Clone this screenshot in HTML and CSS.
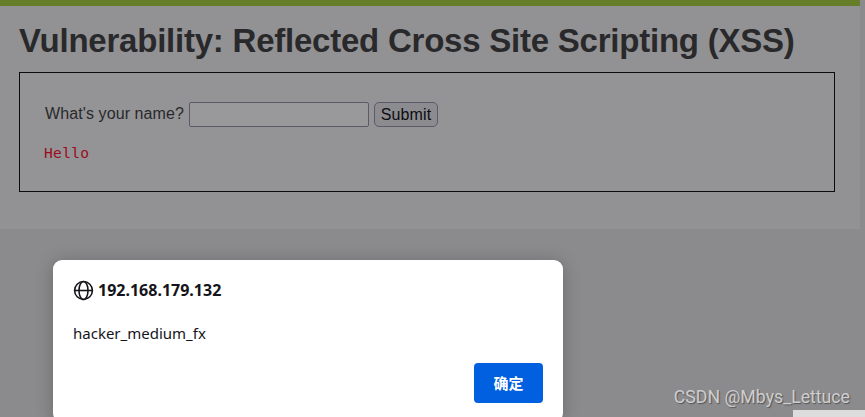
FILE: index.html
```html
<!DOCTYPE html>
<html lang="zh-CN">
<head>
<meta charset="utf-8">
<title>Vulnerability: Reflected Cross Site Scripting (XSS)</title>
<link rel="stylesheet" href="styles.css">
</head>
<body>
<main class="page">
  <h1 class="title">Vulnerability: Reflected Cross Site Scripting (XSS)</h1>
  <section class="box">
    <form class="form">
      <label class="label" for="name">What's your name?</label>
      <input class="field" id="name" type="text">
      <button class="submit" type="button">Submit</button>
    </form>
    <pre class="result">Hello</pre>
  </section>
</main>
<div class="dialog" role="dialog">
  <div class="origin">
    <svg class="globe" viewBox="0 0 20 20" fill="none" stroke="#15141a" stroke-width="1.5">
      <circle cx="10" cy="10" r="8.5"/>
      <ellipse cx="10" cy="10" rx="4.3" ry="8.5"/>
      <path d="M1.5 10h17"/>
    </svg>
    <span class="host">192.168.179.132</span>
  </div>
  <p class="message">hacker_medium_fx</p>
  <button class="ok" type="button">确定</button>
</div>
<div class="corner"></div>
<div class="watermark">CSDN @Mbys_Lettuce</div>
</body>
</html>
```
FILE: styles.css
```css
* {
  box-sizing: border-box;
}

body {
  margin: 0;
  height: 417px;
  overflow: hidden;
  position: relative;
  background: #8b8b8d;
  font-family: "Liberation Sans", Arial, sans-serif;
}

.page {
  width: 860px;
  height: 229px;
  padding: 15px 25px 0 19px;
  border-top: 6px solid #667e2a;
  background: #929294;
}

.title {
  margin: 0;
  height: 51px;
  font-size: 33px;
  line-height: 39px;
  letter-spacing: -0.23px;
  white-space: nowrap;
  color: #29292c;
}

.box {
  height: 120px;
  padding: 29px 24px 0 25px;
  border: 1px solid #0c0c0e;
  background: #949496;
}

.form {
  display: flex;
  height: 26px;
}

.label {
  width: 144px;
  font-size: 16px;
  line-height: 24px;
  letter-spacing: 0.1px;
  white-space: nowrap;
  color: #29292c;
}

.field {
  width: 180px;
  height: 25px;
  margin-right: 5px;
  border: 1px solid #5c5a68;
  border-radius: 2px;
  background: #99999b;
}

.submit {
  width: 64px;
  height: 25px;
  padding: 0;
  border: 1px solid #5c5a68;
  border-radius: 5px;
  background: #8c8b90;
  color: #0d0d10;
  font: 16px/23px "Liberation Sans", Arial, sans-serif;
  letter-spacing: 0.1px;
}

.result {
  margin: 15px 0 0 -1px;
  font: 14.5px/20px "DejaVu Sans Mono", monospace;
  letter-spacing: 0.35px;
  color: #990c1c;
}

.dialog {
  position: absolute;
  left: 53px;
  top: 260px;
  width: 510px;
  height: 162px;
  padding: 20px;
  display: flex;
  flex-direction: column;
  border-radius: 9px;
  background: #fff;
  box-shadow: 0 2px 18px rgba(0, 0, 0, 0.24);
  color: #15141a;
  font-family: "Noto Sans", "Noto Sans CJK SC", sans-serif;
}

.origin {
  display: flex;
  align-items: center;
  gap: 4px;
  height: 21px;
}

.globe {
  width: 21px;
  height: 21px;
}

.host {
  position: relative;
  top: -1px;
  font-size: 16px;
  font-weight: 700;
}

.message {
  margin: 21px 0 19px;
  font-size: 15px;
  line-height: 22px;
}

.ok {
  align-self: flex-end;
  flex: none;
  width: 69px;
  height: 40px;
  padding: 0;
  border: 0;
  border-radius: 4px;
  background: #0060df;
  color: #fff;
  font: 700 15px/40px "Noto Sans CJK SC", sans-serif;
}

.corner {
  position: absolute;
  right: 0;
  bottom: 0;
  width: 72px;
  height: 7px;
  background: #dcdcdc;
}

.watermark {
  position: absolute;
  right: 15px;
  bottom: 9px;
  font: 17.7px/22px Roboto, sans-serif;
  white-space: nowrap;
  color: #cececf;
  text-shadow: 1px 1px 1px #555557;
}
```
